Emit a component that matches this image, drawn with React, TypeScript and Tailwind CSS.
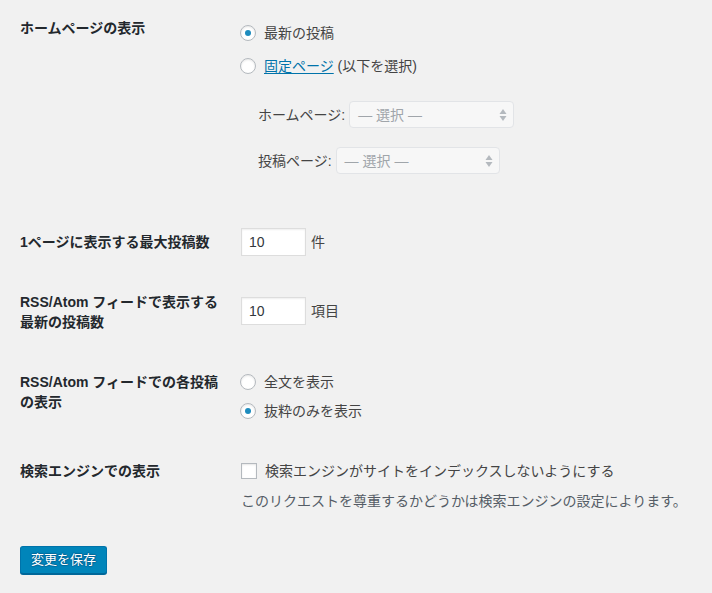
const font = "font-['Liberation_Sans','Noto_Sans_CJK_JP',sans-serif]";

const Radio = ({ checked }: { checked?: boolean }) => (
  <span className="w-4 h-4 shrink-0 rounded-full border border-[#b4b9be] bg-white shadow-[inset_0_1px_2px_rgba(0,0,0,0.1)] flex items-center justify-center">
    {checked && <span className="w-1.5 h-1.5 rounded-full bg-[#1e8cbe]" />}
  </span>
);

const SelectBox = ({ width }: { width: string }) => (
  <div className={`${width} h-[27px] rounded-[4px] border border-[#e2e4e7] bg-[#f7f7f7] flex items-center justify-between pl-2 pr-[6px] text-[#a0a5aa]`}>
    <span>— 選択 —</span>
    <svg width="8" height="14" viewBox="0 0 8 14">
      <path d="M4 1 L7.5 6 H0.5 Z" fill="#b4b9be" />
      <path d="M4 13 L7.5 8 H0.5 Z" fill="#b4b9be" />
    </svg>
  </div>
);

const NumberInput = () => (
  <div className="w-[65px] h-[28px] border border-[#ddd] bg-white shadow-[inset_0_1px_2px_rgba(0,0,0,0.07)] flex items-center px-[7px] text-[#32373c]">
    10
  </div>
);

export default function App() {
  return (
    <div className={`min-h-screen bg-[#f1f1f1] pl-5 text-[14px] leading-5 text-[#444] ${font}`}>
      {/* ホームページの表示 */}
      <div className="flex">
        <div className="w-[220px] pt-[18px] font-bold text-[#23282d]">ホームページの表示</div>
        <div className="pt-[21px]">
          <div className="h-6 flex items-center gap-2">
            <Radio checked />
            <span>最新の投稿</span>
          </div>
          <div className="mt-[9px] h-6 flex items-center gap-2">
            <Radio />
            <span>
              <span className="text-[#0073aa] underline underline-offset-2">固定ページ</span> (以下を選択)
            </span>
          </div>
          <div className="mt-[23px] ml-[18px] flex items-center gap-1">
            <span>ホームページ:</span>
            <SelectBox width="w-[165px]" />
          </div>
          <div className="mt-[19px] ml-[18px] flex items-center gap-1">
            <span>投稿ページ:</span>
            <SelectBox width="w-[164px]" />
          </div>
        </div>
      </div>

      {/* 1ページに表示する最大投稿数 */}
      <div className="flex mt-[54px]">
        <div className="w-[220px] pt-1 font-bold text-[#23282d]">1ページに表示する最大投稿数</div>
        <div className="flex items-center gap-[5px] pl-px">
          <NumberInput />
          <span>件</span>
        </div>
      </div>

      {/* RSS */}
      <div className="flex mt-9">
        <div className="w-[220px] font-bold text-[#23282d]">
          RSS/Atom フィードで表示する
          <br />
          最新の投稿数
        </div>
        <div className="flex items-center gap-[5px] pl-px mt-[5px] self-start">
          <NumberInput />
          <span>項目</span>
        </div>
      </div>

      <div className="flex mt-10">
        <div className="w-[220px] font-bold text-[#23282d]">
          RSS/Atom フィードでの各投稿
          <br />
          の表示
        </div>
        <div>
          <div className="h-5 flex items-center gap-2">
            <Radio />
            <span>全文を表示</span>
          </div>
          <div className="mt-[9px] h-5 flex items-center gap-2">
            <Radio checked />
            <span>抜粋のみを表示</span>
          </div>
        </div>
      </div>

      {/* 検索エンジン */}
      <div className="flex mt-10">
        <div className="w-[220px] font-bold text-[#23282d]">検索エンジンでの表示</div>
        <div className="pl-px">
          <div className="h-5 flex items-center gap-2">
            <span className="w-4 h-4 border border-[#b4b9be] bg-white shadow-[inset_0_1px_2px_rgba(0,0,0,0.1)]" />
            <span>検索エンジンがサイトをインデックスしないようにする</span>
          </div>
          <p className="mt-[10px] text-[#555d66]">
            このリクエストを尊重するかどうかは検索エンジンの設定によります。
          </p>
        </div>
      </div>

      <button className="mt-[35px] h-[28px] px-[10px] rounded-[3px] border border-[#0073aa] border-b-[#006799] bg-[#0085ba] text-white text-[13px] shadow-[0_1px_0_#006799] [text-shadow:0_-1px_1px_#006799,1px_0_1px_#006799,0_1px_1px_#006799,-1px_0_1px_#006799]">
        変更を保存
      </button>
    </div>
  );
}
